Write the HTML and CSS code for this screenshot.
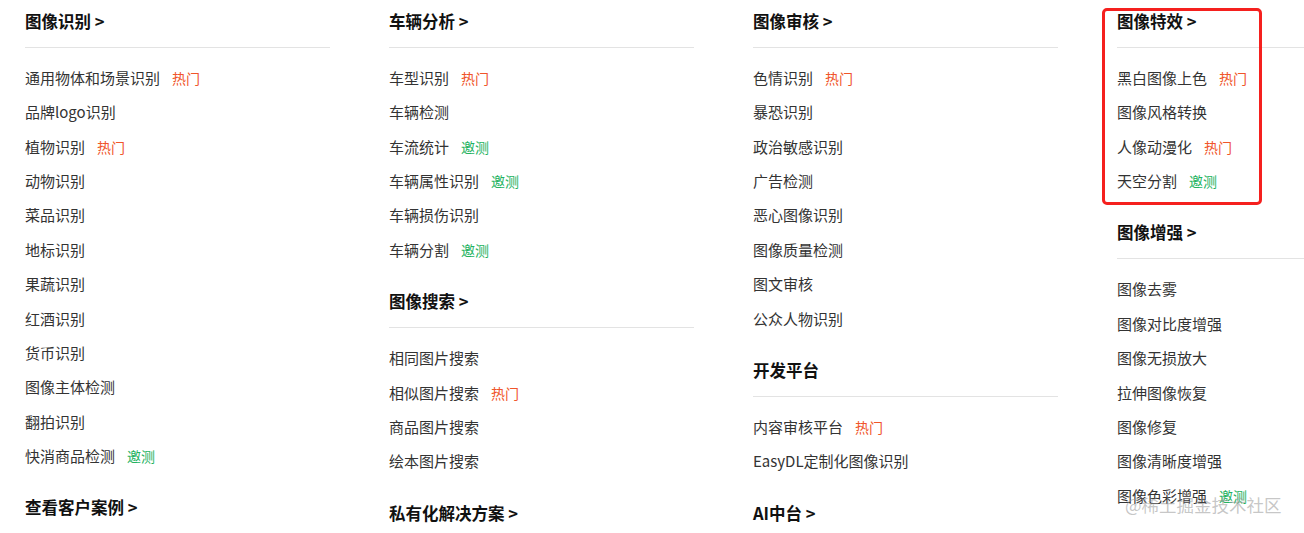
FILE: index.html
```html
<!DOCTYPE html>
<html lang="zh-CN">
<head>
    <meta charset="UTF-8">
    <meta name="viewport" content="width=device-width, initial-scale=1.0">
    <title>产品导航</title>
    <link rel="stylesheet" href="styles.css">
</head>
<body>

    <div class="menu">
        <!-- 第一列 -->
        <div class="menu-col">
            <div class="menu-title">图像识别 &gt;</div>
            <ul class="menu-list">
                <li>通用物体和场景识别<span class="tag tag-hot">热门</span></li>
                <li>品牌logo识别</li>
                <li>植物识别<span class="tag tag-hot">热门</span></li>
                <li>动物识别</li>
                <li>菜品识别</li>
                <li>地标识别</li>
                <li>果蔬识别</li>
                <li>红酒识别</li>
                <li>货币识别</li>
                <li>图像主体检测</li>
                <li>翻拍识别</li>
                <li>快消商品检测<span class="tag tag-test">邀测</span></li>
            </ul>
            <div class="menu-title">查看客户案例 &gt;</div>
        </div>

        <!-- 第二列 -->
        <div class="menu-col">
            <div class="menu-title">车辆分析 &gt;</div>
            <ul class="menu-list">
                <li>车型识别<span class="tag tag-hot">热门</span></li>
                <li>车辆检测</li>
                <li>车流统计<span class="tag tag-test">邀测</span></li>
                <li>车辆属性识别<span class="tag tag-test">邀测</span></li>
                <li>车辆损伤识别</li>
                <li>车辆分割<span class="tag tag-test">邀测</span></li>
            </ul>
            <div class="menu-title">图像搜索 &gt;</div>
            <ul class="menu-list">
                <li>相同图片搜索</li>
                <li>相似图片搜索<span class="tag tag-hot">热门</span></li>
                <li>商品图片搜索</li>
                <li>绘本图片搜索</li>
            </ul>
            <div class="menu-title">私有化解决方案 &gt;</div>
        </div>

        <!-- 第三列 -->
        <div class="menu-col">
            <div class="menu-title">图像审核 &gt;</div>
            <ul class="menu-list">
                <li>色情识别<span class="tag tag-hot">热门</span></li>
                <li>暴恐识别</li>
                <li>政治敏感识别</li>
                <li>广告检测</li>
                <li>恶心图像识别</li>
                <li>图像质量检测</li>
                <li>图文审核</li>
                <li>公众人物识别</li>
            </ul>
            <div class="menu-title">开发平台</div>
            <ul class="menu-list">
                <li>内容审核平台<span class="tag tag-hot">热门</span></li>
                <li>EasyDL定制化图像识别</li>
            </ul>
            <div class="menu-title">AI中台 &gt;</div>
        </div>

        <!-- 第四列 -->
        <div class="menu-col">
            <div class="highlight-box"></div>
            <div class="menu-title">图像特效 &gt;</div>
            <ul class="menu-list">
                <li>黑白图像上色<span class="tag tag-hot">热门</span></li>
                <li>图像风格转换</li>
                <li>人像动漫化<span class="tag tag-hot">热门</span></li>
                <li>天空分割<span class="tag tag-test">邀测</span></li>
            </ul>
            <div class="menu-title">图像增强 &gt;</div>
            <ul class="menu-list">
                <li>图像去雾</li>
                <li>图像对比度增强</li>
                <li>图像无损放大</li>
                <li>拉伸图像恢复</li>
                <li>图像修复</li>
                <li>图像清晰度增强</li>
                <li>图像色彩增强<span class="tag tag-test">邀测</span></li>
            </ul>
        </div>
    </div>

    <div class="watermark">@稀土掘金技术社区</div>

</body>
</html>
```

FILE: styles.css
```css
/* General styling */
body {
    margin: 0;
    padding: 0 0 0 25px;
    background-color: #fff;
    color: #333;
    font-family: "Noto Sans CJK SC", "Liberation Sans", sans-serif;
    overflow: hidden;
    height: 533px;
}

.menu {
    display: grid;
    grid-template-columns: repeat(3, 305px) 1fr;
    column-gap: 59px;
}

.menu-col {
    position: relative;
}

/* Section headings */
.menu-title {
    font-size: 16.5px;
    font-weight: bold;
    line-height: 22px;
    color: #111;
    padding: 10px 0 15px;
    border-bottom: 1px solid #e3e3e3;
}

/* Link lists */
.menu-list {
    list-style: none;
    margin: 0;
    padding: 13px 0;
}

.menu-list li {
    font-size: 15px;
    line-height: 34.36px;
    height: 34.36px;
    color: #333;
    white-space: nowrap;
}

/* Tags */
.tag {
    font-size: 14px;
    margin-left: 12px;
}
.tag-hot { color: #f0552a; }
.tag-test { color: #22b260; }

/* Red annotation box */
.highlight-box {
    position: absolute;
    left: -15px;
    top: 8px;
    width: 154px;
    height: 191px;
    border: 3px solid #f5201e;
    border-radius: 5px;
}

/* Watermark */
.watermark {
    position: absolute;
    left: 1125px;
    top: 492px;
    font-size: 17.5px;
    color: rgba(150, 150, 150, 0.55);
    white-space: nowrap;
}
```
